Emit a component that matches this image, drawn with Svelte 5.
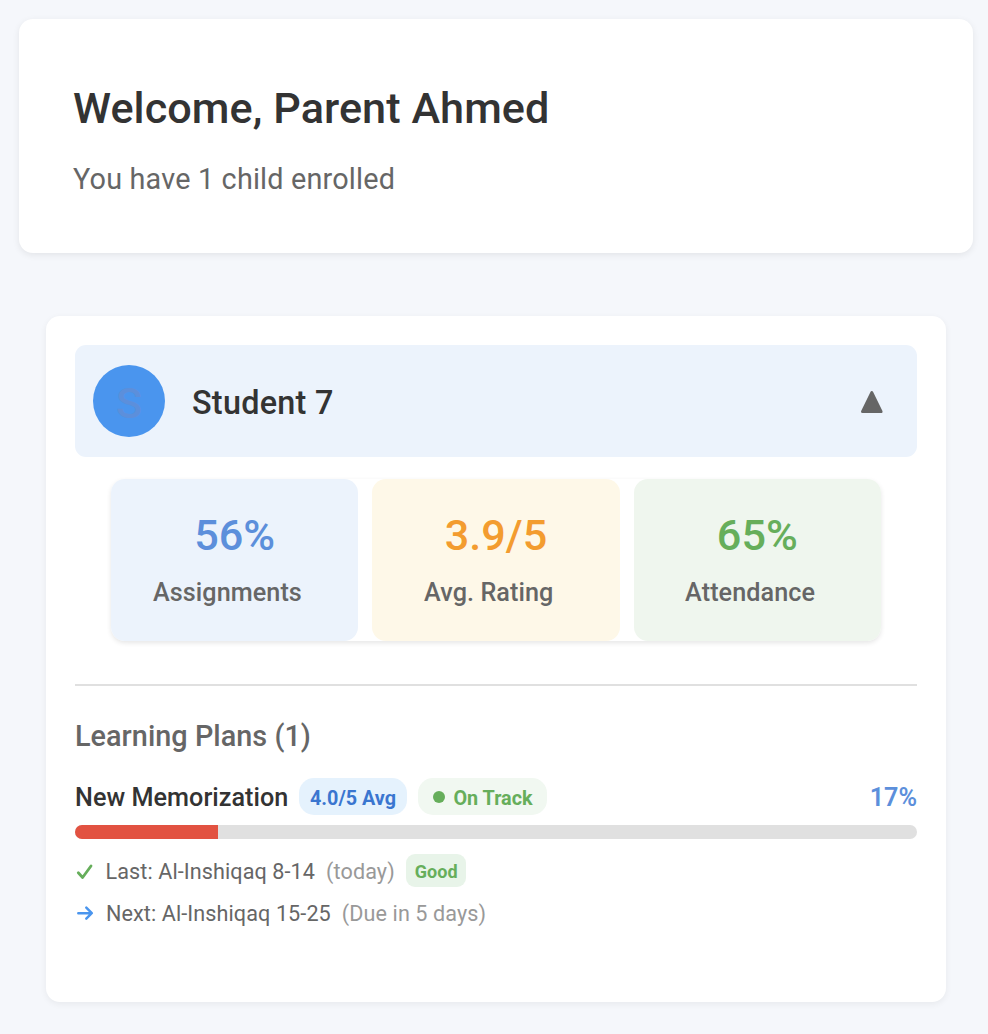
<script lang="ts">
	const stats = [
		{ value: '56%', label: 'Assignments', tone: 'blue' },
		{ value: '3.9/5', label: 'Avg. Rating', tone: 'amber' },
		{ value: '65%', label: 'Attendance', tone: 'green' }
	];

	const student = { name: 'Student 7', initial: 'S' };
	const plan = { name: 'New Memorization', progress: 17 };

	let expanded = $state(true);
</script>

<main>
	<section class="welcome">
		<h1>Welcome, Parent Ahmed</h1>
		<p>You have 1 child enrolled</p>
	</section>

	<section class="child">
		<button type="button" class="student" onclick={() => (expanded = !expanded)}>
			<span class="avatar"><span>{student.initial}</span></span>
			<span class="student-name">{student.name}</span>
			<svg class="caret" class:closed={!expanded} viewBox="0 0 26 26">
				<path d="M12.8 4.6 22.1 23.6H3.5z" />
			</svg>
		</button>

		{#if expanded}
			<div class="stats">
				{#each stats as stat}
					<div class="stat {stat.tone}">
						<div class="value">{stat.value}</div>
						<div class="label">{stat.label}</div>
					</div>
				{/each}
			</div>

			<div class="plans">
				<h2>Learning Plans (1)</h2>
				<div class="plan-head">
					<span class="plan-name">{plan.name}</span>
					<span class="chip rating"><span>4.0/5 Avg</span></span>
					<span class="chip track"><i></i><span>On Track</span></span>
					<span class="percent">{plan.progress}%</span>
				</div>
				<div class="bar">
					<div class="fill" style="width: {plan.progress}%"></div>
				</div>
				<div class="row last">
					<svg class="check" viewBox="0 0 20 20">
						<path d="M3.3 11.8 7.6 16.5 16 5" />
					</svg>
					<span class="text">Last: Al-Inshiqaq 8-14</span>
					<span class="muted">(today)</span>
					<span class="grade"><span>Good</span></span>
				</div>
				<div class="row next">
					<svg class="arrow" viewBox="0 0 20 20">
						<path d="M3.3 10.2H16.5M11.3 4.7 16.8 10.2 11.3 15.7" />
					</svg>
					<span class="text">Next: Al-Inshiqaq 15-25</span>
					<span class="muted">(Due in 5 days)</span>
				</div>
			</div>
		{/if}
	</section>
</main>

<style>
	:global(body) {
		background: #f5f7fb;
	}

	main {
		box-sizing: border-box;
		height: 1034px;
		padding: 19px 15px 0 19px;
		font-family: Roboto, sans-serif;
		color: #333;
		white-space: nowrap;
	}

	.welcome {
		box-sizing: border-box;
		height: 234px;
		padding: 61px 54px;
		border-radius: 14px;
		background: #fff;
		box-shadow: 0 2px 7px rgba(0, 0, 0, 0.08);
	}

	h1 {
		margin: 0;
		font-size: 43.2px;
		line-height: 58px;
		font-weight: 500;
		letter-spacing: 0.06px;
	}

	.welcome p {
		margin: 21px 0 0;
		font-size: 28.8px;
		line-height: 40px;
		letter-spacing: 0.18px;
		color: #666;
	}

	.child {
		box-sizing: border-box;
		height: 686px;
		margin: 63px 27px 0;
		padding: 29px;
		border-radius: 14px;
		background: #fff;
		box-shadow: 0 2px 7px rgba(0, 0, 0, 0.06);
	}

	.student {
		display: flex;
		align-items: center;
		width: 100%;
		height: 112px;
		padding: 0 32px 0 18px;
		border: none;
		border-radius: 11px;
		background: #ecf3fc;
		font: inherit;
		color: inherit;
		cursor: pointer;
	}

	.avatar {
		display: flex;
		align-items: center;
		justify-content: center;
		width: 72px;
		height: 72px;
		margin-right: 27px;
		border-radius: 50%;
		background: #4a95ee;
		color: #5c8fdb;
		font-size: 43.2px;
		font-weight: 500;
	}

	.avatar span {
		padding-top: 4px;
	}

	.student-name {
		padding-top: 4px;
		font-size: 32.4px;
		line-height: 40px;
		font-weight: 500;
		letter-spacing: 0.25px;
	}

	.caret {
		width: 26px;
		height: 26px;
		margin-left: auto;
		fill: #666;
		stroke: #666;
		stroke-width: 3;
		stroke-linejoin: round;
	}

	.caret.closed {
		transform: rotate(180deg);
	}

	.stats {
		display: grid;
		grid-template-columns: repeat(3, 1fr);
		gap: 14px;
		height: 162px;
		margin: 22px 36px 0;
		border-radius: 14px;
		box-shadow: 0 2px 5px rgba(0, 0, 0, 0.1);
	}

	.stat {
		padding-top: 32px;
		border-radius: 14px;
		text-align: center;
	}

	.value {
		font-size: 43.2px;
		line-height: 50px;
		font-weight: 500;
	}

	.label {
		margin-top: 14px;
		padding-right: 14.5px;
		font-size: 25.2px;
		line-height: 36px;
		font-weight: 500;
		letter-spacing: 0.07px;
		color: #666;
	}

	.blue {
		background: #ecf3fc;
	}

	.blue .value {
		color: #5c8fdb;
	}

	.amber {
		background: #fef8e8;
	}

	.amber .value {
		color: #f39c2f;
	}

	.green {
		background: #eff6ee;
	}

	.green .value {
		color: #66ae5b;
	}

	.plans {
		margin-top: 43px;
		border-top: 2px solid #e0e0e0;
	}

	h2 {
		margin: 30px 0 0;
		font-size: 28.8px;
		line-height: 40px;
		font-weight: 500;
		letter-spacing: 0.04px;
		color: #666;
	}

	.plan-head {
		display: flex;
		align-items: center;
		height: 37px;
		margin-top: 22px;
	}

	.plan-name,
	.percent {
		padding-top: 2px;
		font-size: 25.2px;
		font-weight: 500;
	}

	.plan-name {
		width: 224px;
		letter-spacing: 0.04px;
	}

	.percent {
		margin-left: auto;
		font-weight: 600;
		color: #5c8fdb;
	}

	.chip {
		box-sizing: border-box;
		display: flex;
		align-items: center;
		justify-content: center;
		height: 37px;
		padding-top: 3px;
		border-radius: 15px;
		font-size: 19.8px;
		font-weight: 700;
	}

	.rating {
		width: 108px;
		margin-right: 11px;
		background: #e5f2fd;
		color: #3a76d0;
	}

	.track {
		width: 129px;
		background: #f1f8f1;
		color: #66ae5b;
	}

	.track i {
		width: 12px;
		height: 12px;
		margin: 0 8px 3px 1px;
		border-radius: 50%;
		background: #66ae5b;
	}

	.bar {
		height: 14px;
		margin-top: 10px;
		border-radius: 7px;
		background: #e0e0e0;
		overflow: hidden;
	}

	.fill {
		height: 100%;
		background: #e25241;
	}

	.row {
		display: flex;
		align-items: center;
		height: 33px;
		margin-top: 15px;
		font-size: 21.6px;
		letter-spacing: 0.09px;
		color: #666;
	}

	.next {
		margin-top: 9px;
	}

	.row svg {
		width: 20px;
		height: 20px;
		margin-right: 11px;
		fill: none;
		stroke-width: 2.5;
		stroke-linecap: round;
		stroke-linejoin: round;
	}

	.row .check {
		margin-right: 10.5px;
		stroke: #66ae5b;
		stroke-width: 2.8;
	}

	.arrow {
		stroke: #4a95ee;
	}

	.text,
	.muted {
		padding-top: 2px;
	}

	.muted {
		margin-left: 11px;
		color: #999;
	}

	.grade {
		display: flex;
		align-items: center;
		justify-content: center;
		width: 60px;
		height: 33px;
		margin-left: 11.5px;
		border-radius: 9px;
		background: #e8f4e9;
		color: #66ae5b;
		font-size: 18px;
		font-weight: 700;
	}

	.grade span {
		padding-top: 2px;
	}
</style>
